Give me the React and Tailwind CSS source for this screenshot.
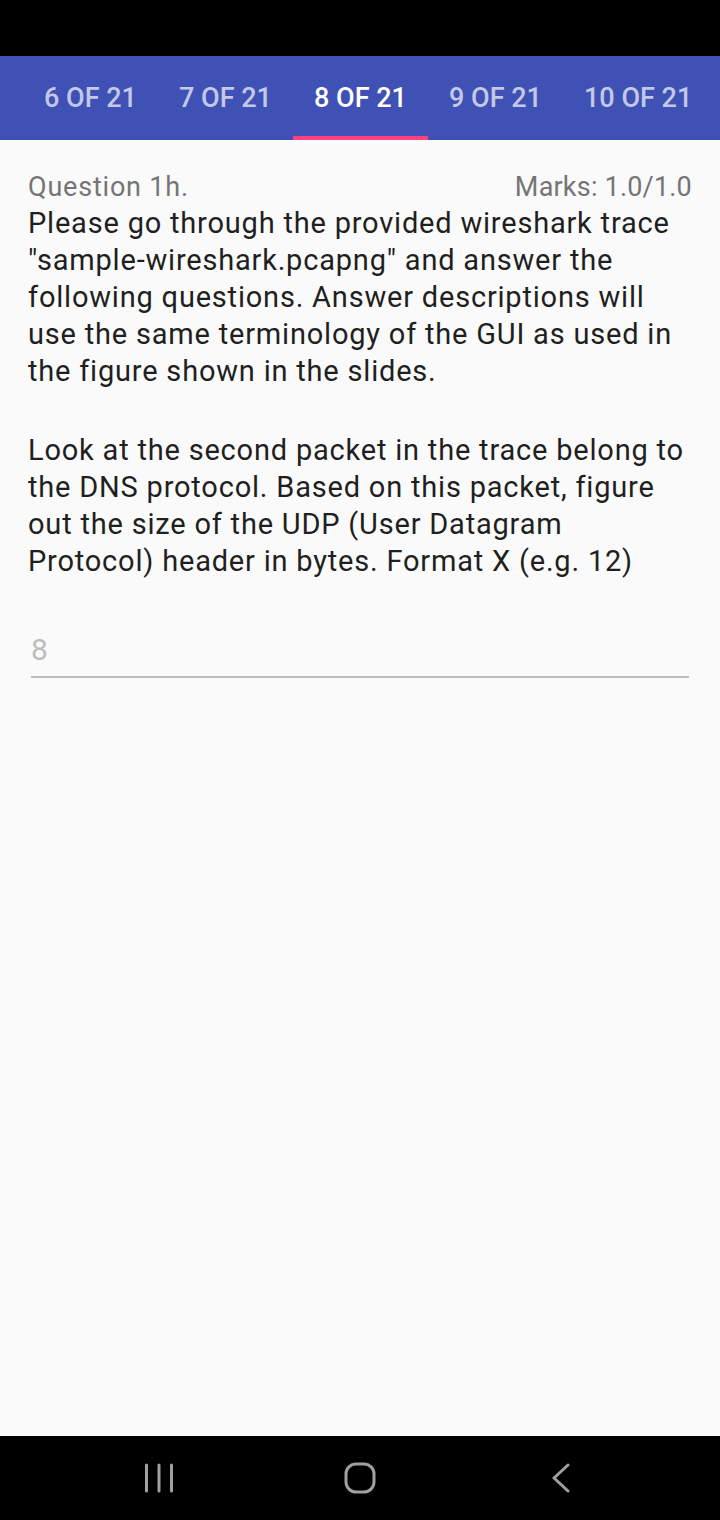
const tabs = ['6 OF 21', '7 OF 21', '8 OF 21', '9 OF 21', '10 OF 21'];

export default function App() {
  const active = '8 OF 21';

  return (
    <div className="w-[720px] h-[1520px] flex flex-col bg-[#fafafa] font-['Roboto',sans-serif]">
      {/* status bar */}
      <div className="h-[56px] bg-black" />

      {/* tabs */}
      <div className="h-[84px] bg-[#3f51b5] flex pl-[23px] overflow-hidden">
        {tabs.map((t) => (
          <div
            key={t}
            className={`relative shrink-0 min-w-[135px] px-[21px] flex items-center justify-center text-[27px] font-medium ${
              t === active ? 'text-white' : 'text-white/70'
            }`}
          >
            {t}
            {t === active && <div className="absolute left-0 right-0 bottom-0 h-[4px] bg-[#ff4081]" />}
          </div>
        ))}
      </div>

      {/* question */}
      <div className="flex-1 pl-[28px] pr-[28px] pt-[29px]">
        <div className="flex justify-between text-[27px] leading-[36px] text-[#757575]">
          <span className="tracking-[0.8px]">Question 1h.</span>
          <span className="tracking-[0.2px]">Marks: 1.0/1.0</span>
        </div>
        <p className="text-[29px] leading-[37px] tracking-[0.8px] text-[#1f1f1f]">
          Please go through the provided wireshark trace "sample-wireshark.pcapng" and answer the following questions. Answer descriptions will use the same terminology of the GUI as used in the figure shown in the slides.
        </p>
        <p className="mt-[42px] text-[29px] leading-[37px] tracking-[0.8px] text-[#1f1f1f]">
          Look at the second packet in the trace belong to the DNS protocol. Based on this packet, figure out the size of the UDP (User Datagram Protocol) header in bytes. Format X (e.g. 12)
        </p>
        <div className="mt-[52px] mx-[3px] border-b-2 border-[#bdbdbd] pb-[8px] text-[30px] leading-[36px] text-[#bdbdbd]">
          8
        </div>
      </div>

      {/* nav bar */}
      <div className="h-[84px] bg-black flex items-center justify-center">
        <div className="w-[201px] flex justify-center">
          <svg width="30" height="30" viewBox="0 0 30 30">
            <g stroke="#a0a0a0" strokeWidth="3" strokeLinecap="round">
              <line x1="2.5" y1="2" x2="2.5" y2="28" />
              <line x1="15" y1="2" x2="15" y2="28" />
              <line x1="27.5" y1="2" x2="27.5" y2="28" />
            </g>
          </svg>
        </div>
        <div className="w-[201px] flex justify-center">
          <svg width="32" height="32" viewBox="0 0 32 32">
            <rect x="2" y="2" width="28" height="28" rx="10" fill="none" stroke="#a0a0a0" strokeWidth="3" />
          </svg>
        </div>
        <div className="w-[201px] flex justify-center">
          <svg width="20" height="30" viewBox="0 0 20 30">
            <polyline points="17,2 3,15 17,28" fill="none" stroke="#a0a0a0" strokeWidth="3" strokeLinecap="round" strokeLinejoin="round" />
          </svg>
        </div>
      </div>
    </div>
  );
}
